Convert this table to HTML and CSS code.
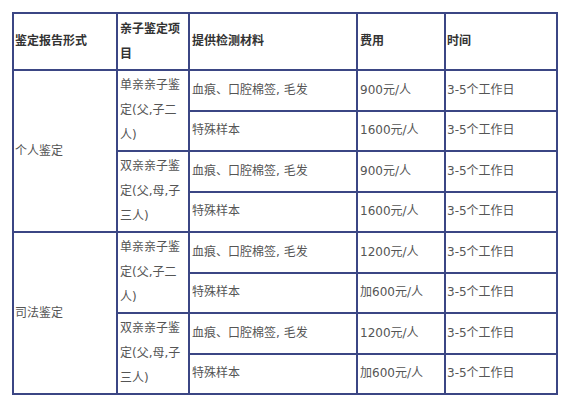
FILE: index.html
```html
<!DOCTYPE html>
<html lang="zh">
<head>
<meta charset="utf-8">
<link rel="stylesheet" href="styles.css">
</head>
<body>
<table class="price-table">
  <colgroup>
    <col class="c1"><col class="c2"><col class="c3"><col class="c4"><col class="c5">
  </colgroup>
  <thead>
    <tr class="head-row">
      <th class="first">鉴定报告形式</th>
      <th>亲子鉴定项目</th>
      <th>提供检测材料</th>
      <th>费用</th>
      <th class="last">时间</th>
    </tr>
  </thead>
  <tbody>
    <tr class="row">
      <td class="first" rowspan="4">个人鉴定</td>
      <td class="multi" rowspan="2">单亲亲子鉴定(父,子二人)</td>
      <td>血痕、口腔棉签, 毛发</td>
      <td>900元/人</td>
      <td class="last">3-5个工作日</td>
    </tr>
    <tr class="row">
      <td>特殊样本</td>
      <td>1600元/人</td>
      <td class="last">3-5个工作日</td>
    </tr>
    <tr class="row">
      <td class="multi" rowspan="2">双亲亲子鉴定(父,母,子三人)</td>
      <td>血痕、口腔棉签, 毛发</td>
      <td>900元/人</td>
      <td class="last">3-5个工作日</td>
    </tr>
    <tr class="row">
      <td>特殊样本</td>
      <td>1600元/人</td>
      <td class="last">3-5个工作日</td>
    </tr>
    <tr class="row">
      <td class="first" rowspan="4">司法鉴定</td>
      <td class="multi" rowspan="2">单亲亲子鉴定(父,子二人)</td>
      <td>血痕、口腔棉签, 毛发</td>
      <td>1200元/人</td>
      <td class="last">3-5个工作日</td>
    </tr>
    <tr class="row">
      <td>特殊样本</td>
      <td>加600元/人</td>
      <td class="last">3-5个工作日</td>
    </tr>
    <tr class="row">
      <td class="multi" rowspan="2">双亲亲子鉴定(父,母,子三人)</td>
      <td>血痕、口腔棉签, 毛发</td>
      <td>1200元/人</td>
      <td class="last">3-5个工作日</td>
    </tr>
    <tr class="row">
      <td>特殊样本</td>
      <td>加600元/人</td>
      <td class="last">3-5个工作日</td>
    </tr>
  </tbody>
</table>
</body>
</html>
```
FILE: styles.css
```css
html, body {
  margin: 0;
  padding: 0;
  background: #ffffff;
}

body {
  font-family: "DejaVu Sans", "Noto Sans CJK SC", sans-serif;
  font-size: 12px;
  color: #555555;
}

.price-table {
  border-collapse: collapse;
  table-layout: fixed;
  width: 544px;
  margin: 12px 0 0 12px;
}

.c1 { width: 104px; }
.c2 { width: 72px; }
.c3 { width: 168px; }
.c4 { width: 88px; }
.c5 { width: 112px; }

.price-table th,
.price-table td {
  border: 2px solid #3b4684;
  padding: 0 2px;
  line-height: 25px;
  text-align: left;
  vertical-align: middle;
  word-break: break-all;
}

.price-table th {
  font-weight: bold;
  color: #333333;
}

.price-table .first {
  padding-left: 1px;
}

.price-table .last {
  padding-left: 1px;
}

.head-row { height: 57px; }
.row { height: 40.5px; }
```
